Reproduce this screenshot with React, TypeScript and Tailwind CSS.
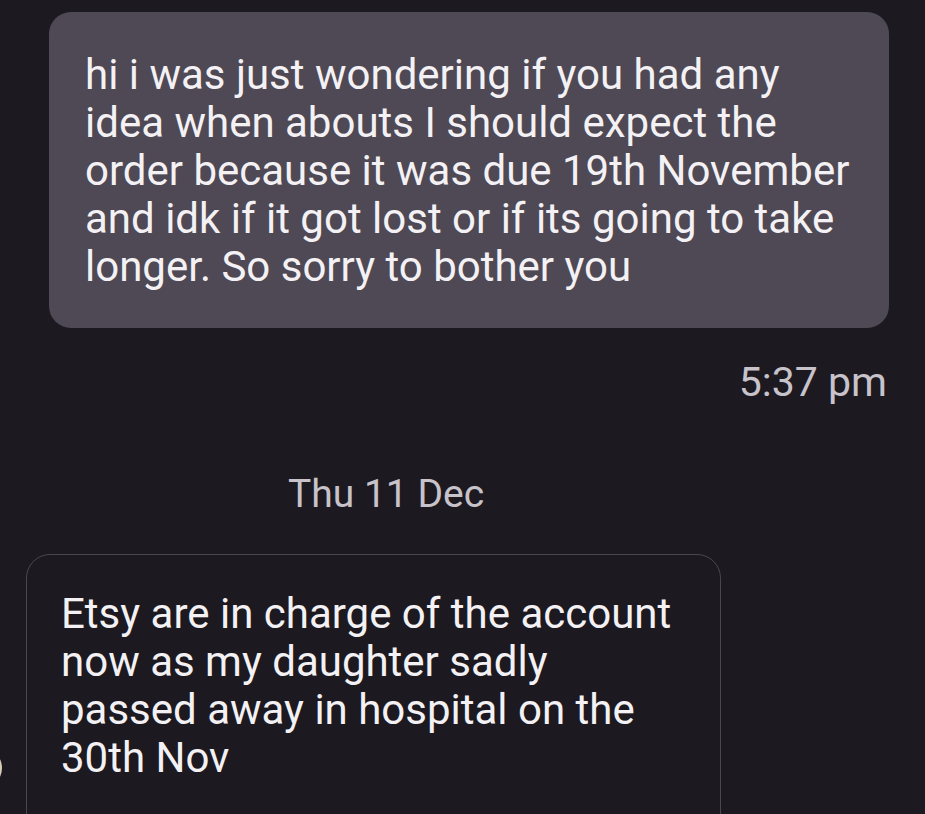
import React from "react";

const first = [
  "hi i was just wondering if you had any",
  "idea when abouts I should expect the",
  "order because it was due 19th November",
  "and idk if it got lost or if its going to take",
  "longer. So sorry to bother you",
];

const reply = [
  "Etsy are in charge of the account",
  "now as my daughter sadly",
  "passed away in hospital on the",
  "30th Nov",
];

export default function App() {
  return (
    <main
      className="h-[814px] w-[925px] overflow-hidden bg-[#1c1a20] text-white"
      style={{ fontFamily: "Roboto, 'Noto Sans', sans-serif" }}
    >
      {/* sent message */}
      <div className="pt-[12px] pl-[49px] pr-[36px]">
        <div className="rounded-[22px] bg-[#4e4954] pt-[39px] pb-[37px] pl-[36px] pr-[20px] text-[42px] leading-[48px] text-[#f4f1f5]">
          {first.map((line, i) => (
            <div key={i} className="whitespace-nowrap">
              {line}
            </div>
          ))}
        </div>
      </div>

      <div className="mt-[32px] pr-[38px] text-right text-[41px] leading-[44px] text-[#c8c2cb]">
        5:37 pm
      </div>

      <div className="mt-[68px] pl-[288px] text-[39px] leading-[44px] text-[#c8c2cb]">
        Thu 11 Dec
      </div>

      {/* received message */}
      <div className="relative mt-[38px] pl-[26px]">
        <div className="absolute -left-[38px] top-[194px] h-[40px] w-[40px] rounded-full bg-[#d8cbb8]" />
        <div className="w-[695px] rounded-[24px] border-[1.5px] border-[#4a4551] pt-[35px] pb-[60px] pl-[34px] text-[42px] leading-[48px] text-[#f4f1f5]">
          {reply.map((line, i) => (
            <div key={i} className="whitespace-nowrap">
              {line}
            </div>
          ))}
        </div>
      </div>
    </main>
  );
}
